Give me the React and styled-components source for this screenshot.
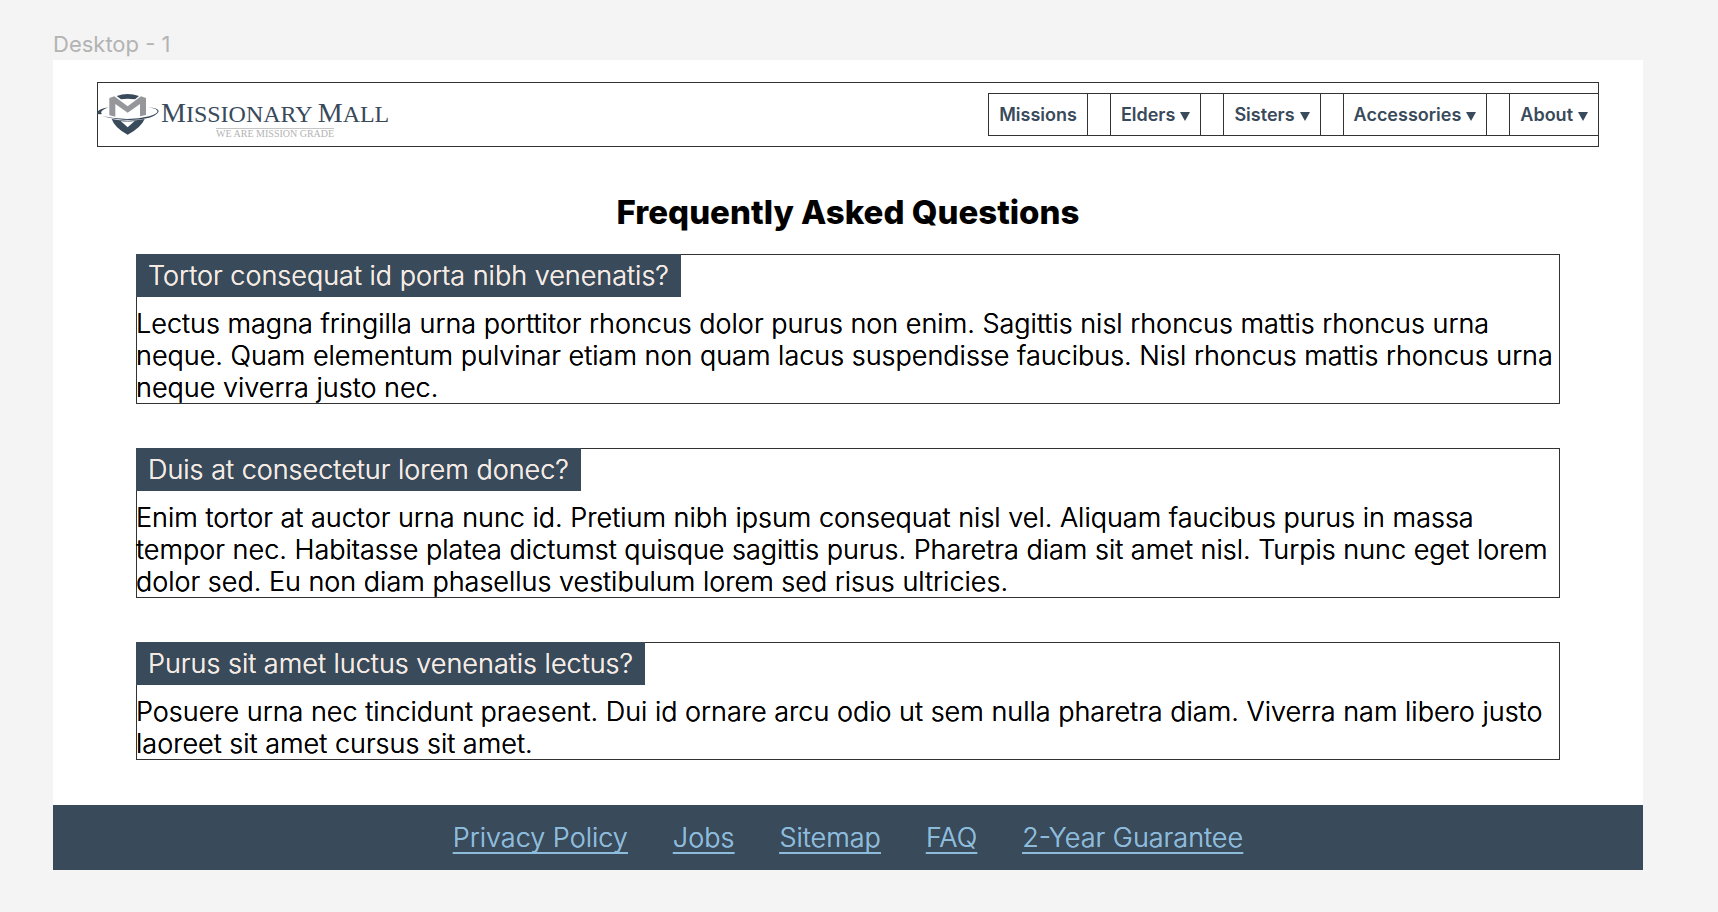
import React from "react";
import styled, { createGlobalStyle, css } from "styled-components";

const navy = "#394a5b";

const GlobalStyle = createGlobalStyle`
  *, *::before, *::after { box-sizing: border-box; }
  body {
    margin: 0;
    background: #f4f4f4;
    color: #000;
    font-family: Inter, "Liberation Sans", sans-serif;
  }
`;

/* Light text with its edges painted twice, so that thin strokes stay firm. */
const copyText = css`
  font-size: 27px;
  line-height: 32px;
  font-weight: 300;
  text-shadow: 0 0 0 currentColor;
`;

const Canvas = styled.div`
  padding: 32px 75px 40px 53px;
`;

const FrameLabel = styled.div`
  height: 28px;
  font-size: 22px;
  line-height: 24px;
  color: #b3b3b3;
`;

const Page = styled.div`
  background: #fff;
`;

const HeaderWrap = styled.div`
  padding: 22px 44px 0;
`;

const Header = styled.header`
  display: flex;
  align-items: flex-start;
  justify-content: space-between;
  height: 65px;
  border: 1px solid #333;
`;

const LogoLink = styled.a`
  display: flex;
  padding-top: 9px;
  text-decoration: none;
  color: ${navy};
  font-family: "Liberation Serif", serif;
`;

const LogoMark = styled.svg`
  display: block;
  width: 64px;
  height: 44px;
  margin-left: -2px;
`;

const LogoWords = styled.span`
  display: flex;
  flex-direction: column;
  align-items: center;
  padding: 7px 0 0 1px;
`;

const LogoName = styled.span`
  font-size: 24px;
  line-height: 28px;
  white-space: nowrap;
`;

const Capital = styled.span`
  font-size: 28px;
`;

const Tagline = styled.span`
  border-top: 1px solid #c4c4c4;
  font-size: 10px;
  line-height: 10px;
  color: #b3b3b3;
  white-space: nowrap;
`;

const NavList = styled.ul`
  display: flex;
  gap: 22px;
  height: 43px;
  margin: 10px -1px 0 0;
  padding: 0;
  list-style: none;
  border: solid #333;
  border-width: 1px 0;
`;

const NavItem = styled.li`
  display: flex;
  border: solid #333;
  border-width: 0 1px;
`;

const NavControl = styled.button`
  display: flex;
  align-items: center;
  gap: 5px;
  padding: 0 10px;
  border: 0;
  background: none;
  color: ${navy};
  font: 600 18px/22px Inter, "Liberation Sans", sans-serif;
  text-decoration: none;
  white-space: nowrap;
  cursor: pointer;
`;

const Caret = styled.svg`
  width: 10px;
  height: 9px;
  margin-top: 4px;
  fill: currentColor;
`;

const Main = styled.main`
  padding: 45px 83px 45px;
`;

const Title = styled.h1`
  margin: 0 0 22px;
  font-size: 33px;
  line-height: 40px;
  font-weight: 800;
  text-align: center;
`;

const FaqList = styled.div`
  display: flex;
  flex-direction: column;
  gap: 44px;
`;

const Faq = styled.article`
  display: flex;
  flex-direction: column;
  align-items: flex-start;
  gap: 11px;
  box-shadow: inset 0 0 0 1px #333;
`;

const Question = styled.h2`
  ${copyText}
  margin: 0;
  padding: 6px 12px 5px;
  background: ${navy};
  color: #f5ebe4;
`;

const Answer = styled.p`
  ${copyText}
  margin: 0;
`;

const Footer = styled.footer`
  display: flex;
  justify-content: center;
  flex-wrap: wrap;
  gap: 45px;
  padding: 17px 0 16px;
  background: ${navy};
`;

const FooterLink = styled.a`
  ${copyText}
  color: #8dbbdb;
  text-decoration: underline 2px;
  text-underline-offset: 5px;
  text-decoration-skip-ink: none;
`;

const navItems = [
  { label: "Missions" },
  { label: "Elders", menu: true },
  { label: "Sisters", menu: true },
  { label: "Accessories", menu: true },
  { label: "About", menu: true },
];

const faqs = [
  {
    question: "Tortor consequat id porta nibh venenatis?",
    answer:
      "Lectus magna fringilla urna porttitor rhoncus dolor purus non enim. Sagittis nisl rhoncus mattis rhoncus urna neque. Quam elementum pulvinar etiam non quam lacus suspendisse faucibus. Nisl rhoncus mattis rhoncus urna neque viverra justo nec.",
  },
  {
    question: "Duis at consectetur lorem donec?",
    answer:
      "Enim tortor at auctor urna nunc id. Pretium nibh ipsum consequat nisl vel. Aliquam faucibus purus in massa tempor nec. Habitasse platea dictumst quisque sagittis purus. Pharetra diam sit amet nisl. Turpis nunc eget lorem dolor sed. Eu non diam phasellus vestibulum lorem sed risus ultricies.",
  },
  {
    question: "Purus sit amet luctus venenatis lectus?",
    answer:
      "Posuere urna nec tincidunt praesent. Dui id ornare arcu odio ut sem nulla pharetra diam. Viverra nam libero justo laoreet sit amet cursus sit amet.",
  },
];

const footerLinks = ["Privacy Policy", "Jobs", "Sitemap", "FAQ", "2-Year Guarantee"];

function Logo() {
  return (
    <LogoLink href="#home">
      <LogoMark viewBox="168 216 192 132" aria-hidden="true">
        <path fill={navy} d="M230 228Q262 216 297 228L285 238Q262 235 243 238Z" />
        <path
          fill={navy}
          fillRule="evenodd"
          d="M215 297Q262 307 314 297Q302 324 263 344Q224 324 215 297ZM242 303L263 322L284 303Q262 306 242 303Z"
        />
        <path fill="#96979b" d="M208 234L223 229L263 259L303 229L318 234V285L300 289V252L263 278L226 252V290L208 286Z" />
        <path fill={navy} d="M205 262Q174 267 171 279Q173 284 186 282Q180 278 188 271Q194 266 205 262Z" />
        <path fill={navy} d="M186 288Q262 305 328 289Q356 280 352 272Q346 264 322 262Q361 265 355 276Q350 286 328 293Q262 309 186 288Z" />
      </LogoMark>
      <LogoWords>
        <LogoName>
          <Capital>M</Capital>ISSIONARY <Capital>M</Capital>ALL
        </LogoName>
        <Tagline>WE ARE MISSION GRADE</Tagline>
      </LogoWords>
    </LogoLink>
  );
}

export default function App() {
  return (
    <Canvas>
      <GlobalStyle />
      <FrameLabel>Desktop - 1</FrameLabel>
      <Page>
        <HeaderWrap>
          <Header>
            <Logo />
            <nav>
              <NavList>
                {navItems.map(({ label, menu }) => (
                  <NavItem key={label}>
                    {menu ? (
                      <NavControl type="button" aria-haspopup="true">
                        {label}
                        <Caret viewBox="0 0 10 9" aria-hidden="true">
                          <path d="M0 0H10L5 9Z" />
                        </Caret>
                      </NavControl>
                    ) : (
                      <NavControl as="a" href="#missions">
                        {label}
                      </NavControl>
                    )}
                  </NavItem>
                ))}
              </NavList>
            </nav>
          </Header>
        </HeaderWrap>
        <Main>
          <Title>Frequently Asked Questions</Title>
          <FaqList>
            {faqs.map(({ question, answer }) => (
              <Faq key={question}>
                <Question>{question}</Question>
                <Answer>{answer}</Answer>
              </Faq>
            ))}
          </FaqList>
        </Main>
        <Footer>
          {footerLinks.map((label) => (
            <FooterLink key={label} href="#info">
              {label}
            </FooterLink>
          ))}
        </Footer>
      </Page>
    </Canvas>
  );
}
